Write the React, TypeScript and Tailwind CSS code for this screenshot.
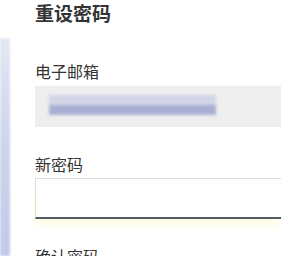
export default function App() {
  const font = { fontFamily: '"Noto Sans CJK SC", "Noto Sans", sans-serif' };

  return (
    <div className="w-[281px] h-[256px] overflow-hidden bg-white flex" style={font}>
      {/* page behind the dialog */}
      <div className="w-[10px] shrink-0 mt-[38px] bg-gradient-to-b from-[#e4e8f4] via-[#cdd4ec] to-[#c2cae8] blur-[1px]" />

      <div className="flex-1 pl-[25px] text-[#333333]">
        <h2 className="text-[19px] leading-[25px] font-bold pl-[-1px]">重设密码</h2>

        <label className="block mt-[34px] text-[16px] leading-[24px]">电子邮箱</label>
        <div className="mt-[3px] h-[41px] bg-[#eeeeee] relative overflow-hidden">
          <div className="absolute left-[14px] top-[9px] w-[167px] blur-[1.5px]">
            <div className="h-[10px] bg-[#d2d5e6]" />
            <div className="h-[10px] bg-[#a9afd3]" />
          </div>
        </div>

        <label className="block mt-[25px] text-[16px] leading-[24px]">新密码</label>
        <div className="mt-[2px] h-[41px] bg-white border-t border-l border-[#dddddd] border-b-2 border-b-[#4f5b66] shadow-[0_6px_8px_rgba(255,250,210,0.6)]" />

        <label className="block mt-[25px] text-[16px] leading-[24px]">确认密码</label>
      </div>
    </div>
  );
}
